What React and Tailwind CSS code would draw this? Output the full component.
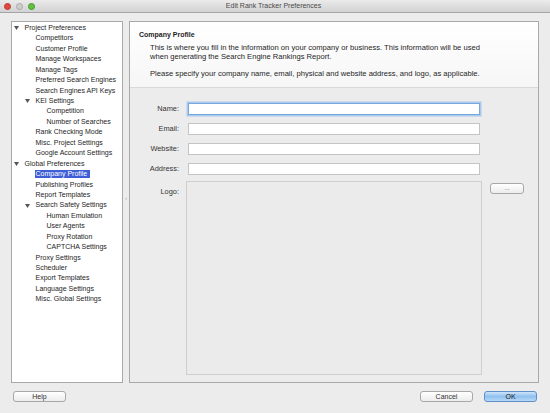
import React from 'react';

// Preferences tree - level decides indent, open marks a node with a triangle
const treeItems = [
  { label: 'Project Preferences', level: 0, open: true },
  { label: 'Competitors', level: 1 },
  { label: 'Customer Profile', level: 1 },
  { label: 'Manage Workspaces', level: 1 },
  { label: 'Manage Tags', level: 1 },
  { label: 'Preferred Search Engines', level: 1 },
  { label: 'Search Engines API Keys', level: 1 },
  { label: 'KEI Settings', level: 1, open: true },
  { label: 'Competition', level: 2 },
  { label: 'Number of Searches', level: 2 },
  { label: 'Rank Checking Mode', level: 1 },
  { label: 'Misc. Project Settings', level: 1 },
  { label: 'Google Account Settings', level: 1 },
  { label: 'Global Preferences', level: 0, open: true },
  { label: 'Company Profile', level: 1, selected: true },
  { label: 'Publishing Profiles', level: 1 },
  { label: 'Report Templates', level: 1 },
  { label: 'Search Safety Settings', level: 1, open: true },
  { label: 'Human Emulation', level: 2 },
  { label: 'User Agents', level: 2 },
  { label: 'Proxy Rotation', level: 2 },
  { label: 'CAPTCHA Settings', level: 2 },
  { label: 'Proxy Settings', level: 1 },
  { label: 'Scheduler', level: 1 },
  { label: 'Export Templates', level: 1 },
  { label: 'Language Settings', level: 1 },
  { label: 'Misc. Global Settings', level: 1 },
];

const indent = { 0: 'pl-[1px]', 1: 'pl-[12px]', 2: 'pl-[23px]' };

const Triangle = () => (
  <svg width="5" height="4" viewBox="0 0 5 4" className="block">
    <polygon points="0,0 5,0 2.5,4" fill="#555" />
  </svg>
);

const TreeRow = ({ item }) => (
  <div className={`flex items-center h-[10.45px] ${indent[item.level]}`}>
    <div className="w-[12px] flex items-center pl-[1.5px]">{item.open && <Triangle />}</div>
    {item.selected ? (
      <span className="bg-[#3d5ed6] text-white px-[1px] -ml-[1px] leading-[8px] pr-[3px]">{item.label}</span>
    ) : (
      <span className="text-[#1e1e1e] whitespace-nowrap">{item.label}</span>
    )}
  </div>
);

const Field = ({ label, focused }) => (
  <div className="flex items-center h-[12px]">
    <div className="w-[49px] text-right text-[#333] text-[7.4px]">{label}</div>
    <div
      className={`ml-[9px] w-[292px] h-[12px] bg-white border ${
        focused ? 'border-[#7aa7dc] shadow-[0_0_0_1.5px_#a9c9ee]' : 'border-[#c4c4c4]'
      }`}
    />
  </div>
);

const MacButton = ({ children, primary }) => (
  <button
    className={`w-[53px] h-[11px] rounded-[3px] border text-[7px] leading-none flex items-center justify-center ${
      primary
        ? 'border-[#5f8fc9] bg-gradient-to-b from-[#cfe4f8] via-[#8fc0ef] to-[#b8d9f7] text-[#1a1a1a]'
        : 'border-[#a8a8a8] bg-gradient-to-b from-white to-[#ececec] text-[#333]'
    }`}
  >
    {children}
  </button>
);

export default function App() {
  return (
    <div
      className="w-[550px] h-[413px] bg-[#ececec] flex flex-col overflow-hidden text-[7px]"
      style={{ fontFamily: '"Liberation Sans", Arial, sans-serif' }}
    >
      {/* title bar */}
      <div className="h-[13px] flex items-center bg-gradient-to-b from-[#ebebeb] to-[#d2d2d2] border-b border-[#a5a5a5] px-[4px]">
        <div className="flex gap-[5px] items-center">
          <div className="w-[7px] h-[7px] rounded-full bg-[#e2483f] border border-[#b93a33]" />
          <div className="w-[7px] h-[7px] rounded-full bg-[#cdcdcd] border border-[#a9a9a9]" />
          <div className="w-[7px] h-[7px] rounded-full bg-[#62c140] border border-[#3f9a2a]" />
        </div>
        <div className="flex-1 text-center text-[#4a4a4a] pr-[34px]">Edit Rank Tracker Preferences</div>
      </div>

      {/* panels */}
      <div className="flex mt-[8px] pl-[10.5px] h-[362px]">
        <div className="w-[112.5px] bg-white border border-[#a9a9a9] pt-[1px] overflow-hidden">
          {treeItems.map((item) => (
            <TreeRow key={item.label} item={item} />
          ))}
        </div>

        <div className="w-[6px] flex items-center justify-center">
          <span className="text-[#9a9a9a] text-[5px] -mt-[6px]">‹</span>
        </div>

        <div className="w-[410px] border border-[#a9a9a9] flex flex-col">
          <div className="h-[66px] bg-gradient-to-b from-white to-[#f6f6f6] border-b border-[#d9d9d9] pl-[9px] pt-[8px] text-[#1e1e1e]">
            <div className="font-bold leading-[10px]">Company Profile</div>
            <div className="pl-[11px] mt-[3px] leading-[9px] text-[7.6px]">
              <p>This is where you fill in the information on your company or business. This information will be used</p>
              <p>when generating the Search Engine Rankings Report.</p>
              <p className="mt-[8px]">Please specify your company name, email, physical and website address, and logo, as applicable.</p>
            </div>
          </div>

          <div className="flex-1 pt-[15px] flex flex-col gap-[8px]">
            <Field label="Name:" focused />
            <Field label="Email:" />
            <Field label="Website:" />
            <Field label="Address:" />
            <div className="flex mt-[-2px]">
              <div className="w-[49px] text-right text-[#333] text-[7.4px] pt-[5px]">Logo:</div>
              <div className="ml-[7px] w-[296px] h-[194px] border border-[#cfcfcf] bg-[#ebebeb]" />
              <div className="ml-[8px] pt-[2px]">
                <button className="w-[34px] h-[10.5px] rounded-[3px] border border-[#a8a8a8] bg-gradient-to-b from-white to-[#ececec] text-[#555] text-[6px] leading-none flex items-center justify-center">
                  ...
                </button>
              </div>
            </div>
          </div>
        </div>
      </div>

      {/* bottom buttons */}
      <div className="flex items-center mt-[8px] pl-[13px] pr-[13px]">
        <MacButton>Help</MacButton>
        <div className="flex-1" />
        <MacButton>Cancel</MacButton>
        <div className="w-[11px]" />
        <MacButton primary>OK</MacButton>
      </div>
    </div>
  );
}
